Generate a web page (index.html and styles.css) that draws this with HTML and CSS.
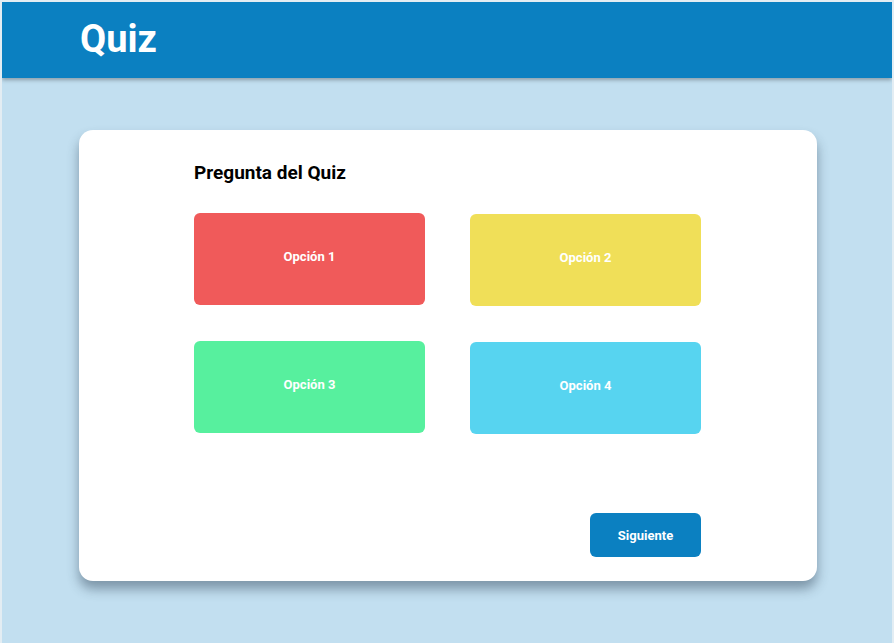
FILE: index.html
```html
<!DOCTYPE html>
<html lang="es">
<head>
<meta charset="utf-8">
<title>Quiz</title>
<link rel="stylesheet" href="styles.css">
</head>
<body>
<div class="page">
  <header class="topbar">
    <h1 class="brand">Quiz</h1>
  </header>
  <main class="main">
    <section class="card">
      <div class="inner">
        <h2 class="question">Pregunta del Quiz</h2>
        <div class="options">
          <button class="option red">Opción 1</button>
          <button class="option yellow shift">Opción 2</button>
          <button class="option green">Opción 3</button>
          <button class="option cyan shift">Opción 4</button>
        </div>
        <div class="actions">
          <button class="next">Siguiente</button>
        </div>
      </div>
    </section>
  </main>
</div>
</body>
</html>
```
FILE: styles.css
```css
html {
  background: #e3edf3;
}
body {
  margin: 0;
  padding: 2px 2px 0 2px;
  font-family: Roboto, "Liberation Sans", sans-serif;
}
.page {
  background: #c2dff0;
  height: 641px;
  overflow: hidden;
}
.topbar {
  height: 76px;
  background: #0b80c1;
  box-shadow: 0 2px 4px rgba(0, 0, 0, 0.3);
  display: flex;
  align-items: center;
  padding-left: 78px;
  position: relative;
}
.brand {
  margin: 0;
  color: #fff;
  font-size: 38px;
  font-weight: 700;
  line-height: 1;
  padding-bottom: 2px;
}
.main {
  padding-top: 52px;
  display: flex;
  justify-content: center;
  padding-left: 2px;
}
.card {
  width: 738px;
  height: 451px;
  box-sizing: border-box;
  background: #fff;
  border-radius: 14px;
  box-shadow: 0 8px 12px rgba(40, 60, 80, 0.45);
  padding-top: 31px;
  padding-left: 115px;
}
.inner {
  width: 507px;
}
.question {
  margin: 0;
  font-size: 19px;
  font-weight: 700;
  color: #000;
  line-height: 24px;
  height: 52px;
}
.options {
  display: grid;
  grid-template-columns: 231px 231px;
  grid-template-rows: 92px 92px;
  column-gap: 45px;
  row-gap: 36px;
}
.option {
  border: none;
  border-radius: 6px;
  color: #fff;
  font-family: Roboto, "Liberation Sans", sans-serif;
  font-weight: 700;
  font-size: 13px;
  padding: 0 0 6px 0;
  margin: 0;
}
.shift {
  transform: translateY(1px);
}
.red { background: #f05a5a; }
.yellow { background: #f0df58; }
.green { background: #57f09e; }
.cyan { background: #57d4f0; }
.actions {
  display: flex;
  justify-content: flex-end;
  margin-top: 80px;
}
.next {
  width: 111px;
  height: 44px;
  border: none;
  border-radius: 6px;
  background: #0b80c1;
  color: #fff;
  font-family: Roboto, "Liberation Sans", sans-serif;
  font-weight: 700;
  font-size: 13px;
}
```
